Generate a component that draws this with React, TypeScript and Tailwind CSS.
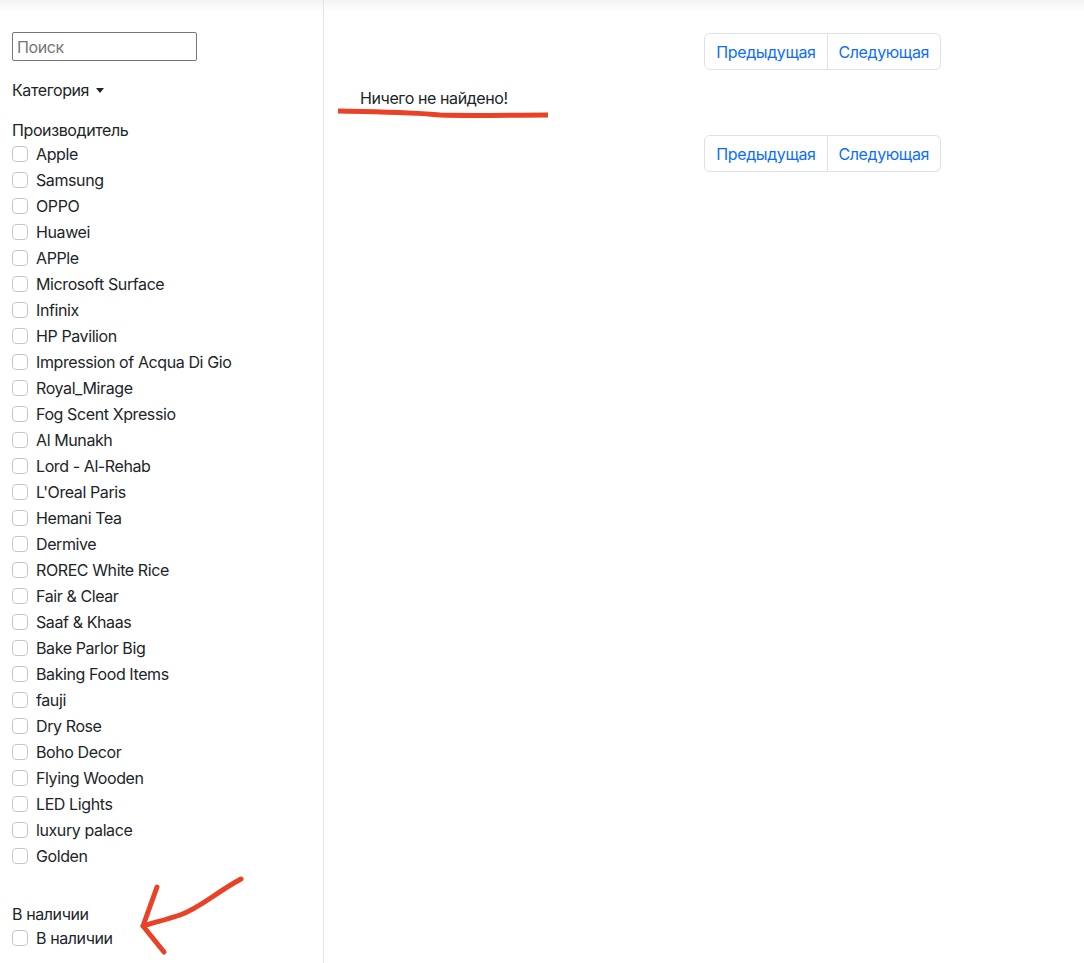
import React from "react";

const brands = [
  "Apple", "Samsung", "OPPO", "Huawei", "APPle", "Microsoft Surface", "Infinix", "HP Pavilion",
  "Impression of Acqua Di Gio", "Royal_Mirage", "Fog Scent Xpressio", "Al Munakh", "Lord - Al-Rehab",
  "L'Oreal Paris", "Hemani Tea", "Dermive", "ROREC White Rice", "Fair & Clear", "Saaf & Khaas",
  "Bake Parlor Big", "Baking Food Items", "fauji", "Dry Rose", "Boho Decor", "Flying Wooden",
  "LED Lights", "luxury palace", "Golden",
];

function Check({ label }: { label: string }) {
  return (
    <label className="flex items-center h-[26px] gap-2">
      <span className="w-4 h-4 border border-[#c4c8cc] rounded-[4px] bg-white shrink-0" />
      <span>{label}</span>
    </label>
  );
}

function Pager() {
  return (
    <div className="flex justify-end">
      <div className="flex text-[#0d6efd]">
        <button className="h-[37px] px-[11px] border border-[#dee2e6] rounded-l-[6px] bg-white">Предыдущая</button>
        <button className="h-[37px] px-[11px] border border-l-0 border-[#dee2e6] rounded-r-[6px] bg-white">Следующая</button>
      </div>
    </div>
  );
}

export default function App() {
  return (
    <div className="relative min-h-[963px] bg-white text-[#212529] text-base tracking-[-0.4px] font-['Inter','Liberation_Sans',sans-serif]">
      <div className="absolute top-0 left-0 right-0 h-3 bg-gradient-to-b from-[#f3f3f3] to-white" />
      <div className="relative flex">
        <aside className="w-[324px] border-r border-[#e3e5e8] pl-3 pt-8 min-h-[963px] shrink-0">
          <input
            placeholder="Поиск"
            className="w-[185px] h-[29px] border border-[#767676] rounded-[2px] px-1 placeholder:text-[#757575] outline-none"
          />
          <div className="mt-[17px] flex items-center gap-[7px] h-6">
            <span>Категория</span>
            <span className="w-0 h-0 border-l-[4px] border-r-[4px] border-t-[5px] border-l-transparent border-r-transparent border-t-[#212529]" />
          </div>
          <div className="mt-4 leading-6">Производитель</div>
          <div className="-mt-px">
            {brands.map((b) => (
              <Check key={b} label={b} />
            ))}
          </div>
          <div className="mt-[33px] leading-6">В наличии</div>
          <div className="-mt-px">
            <Check label="В наличии" />
          </div>
        </aside>
        <main className="pl-9 pt-[33px] w-[617px]">
          <Pager />
          <div className="mt-4 leading-6">Ничего не найдено!</div>
          <div className="mt-[25px]">
            <Pager />
          </div>
        </main>
      </div>
      <svg className="absolute left-0 top-0 pointer-events-none" width="1084" height="963">
        <path d="M338 111 C 380 112, 410 112, 440 115 C 470 116, 510 115, 548 115" stroke="#ea4127" strokeWidth="5" fill="none" strokeLinecap="butt" />
        <path d="M241 879 C 215 893, 200 908, 180 915 C 165 920, 152 923, 143 926" stroke="#ea4127" strokeWidth="5" fill="none" strokeLinecap="round" />
        <path d="M157 887 L 143 926 L 164 952" stroke="#ea4127" strokeWidth="5" fill="none" strokeLinecap="round" strokeLinejoin="round" />
      </svg>
    </div>
  );
}
